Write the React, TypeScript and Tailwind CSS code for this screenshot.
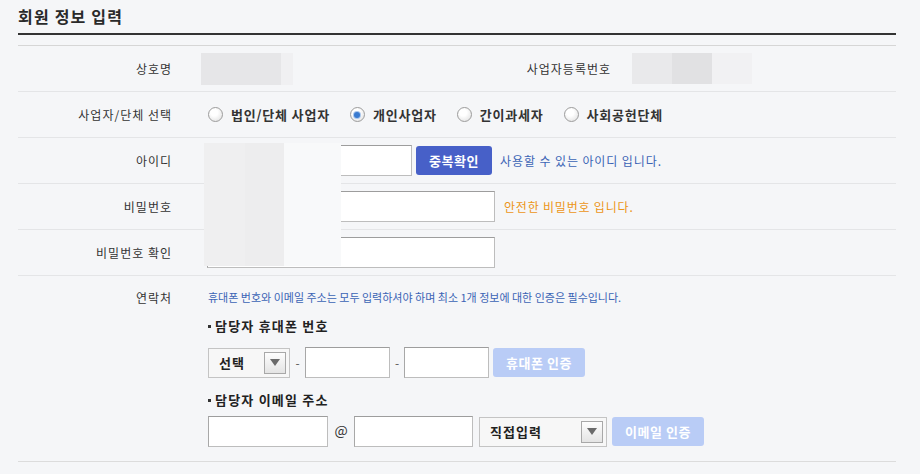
import React from "react";

const Radio = ({ checked, label }: { checked?: boolean; label: string }) => (
  <label className="flex items-center mr-[20px]">
    <span className="w-[15px] h-[15px] rounded-full border border-[#9c9c9c] bg-[radial-gradient(circle_at_40%_35%,#ffffff_30%,#dcdcdc_100%)] flex items-center justify-center">
      {checked && <span className="w-[6px] h-[6px] rounded-full bg-[#3a7bd0] shadow-[0_0_0_1px_#a9c6ec]" />}
    </span>
    <span className="ml-[8px] text-[13px] font-bold text-[#333] tracking-[0.8px]">{label}</span>
  </label>
);

const Input = ({ w }: { w: string }) => (
  <div className={`${w} h-[31px] bg-white border border-[#bdbdbd] border-t-[#9d9d9d] border-l-[#a8a8a8]`} />
);

const Select = ({ w, text }: { w: string; text: string }) => (
  <div className={`${w} h-[30px] bg-[#f7f7f7] border border-[#c4c4c4] flex items-center justify-between pl-[10px] pr-[3px]`}>
    <span className="text-[13px] font-bold text-[#222] tracking-[1px]">{text}</span>
    <span className="w-[22px] h-[22px] border border-[#a8a8a8] bg-[linear-gradient(#fdfdfd,#e4e4e4)] flex items-center justify-center">
      <span className="w-0 h-0 border-x-[5px] border-x-transparent border-t-[7px] border-t-[#6a6a6a]" />
    </span>
  </div>
);

const Label = ({ children }: { children: React.ReactNode }) => (
  <div className="w-[172px] shrink-0 text-right pr-[18px] text-[12px] text-[#333] tracking-[1px]">{children}</div>
);

export default function App() {
  return (
    <div className="relative w-[920px] h-[474px] bg-[#f5f6f8] overflow-hidden font-['Noto_Sans_CJK_KR','Noto_Sans',sans-serif] leading-[18px]">
      <div className="pl-[18px] pr-[24px]">
        {/* title */}
        <div className="h-[35px] border-b-2 border-[#333] flex items-start pt-[6px]">
          <h1 className="text-[16px] font-bold text-[#2a2a2a] leading-[20px] tracking-[1.2px]">회원 정보 입력</h1>
        </div>

        <div className="mt-[10px] border-t border-[#d6d6d6]">
          {/* 상호명 */}
          <div className="h-[46px] border-b border-[#e4e5e7] flex items-center">
            <Label>상호명</Label>
            <div className="flex-1 pl-[11px] flex">
              <div className="w-[80px] h-[32px] bg-[#e6e6e8]" />
              <div className="w-[12px] h-[32px] bg-[#f0f0f2]" />
            </div>
            <div className="w-[140px] text-right pr-[19px] text-[12px] text-[#333] tracking-[1px]">사업자등록번호</div>
            <div className="w-[266px] pl-[2px] flex">
              <div className="w-[40px] h-[31px] bg-[#e9e9eb]" />
              <div className="w-[40px] h-[31px] bg-[#e1e1e3]" />
              <div className="w-[40px] h-[31px] bg-[#f1f1f3]" />
            </div>
          </div>

          {/* 사업자/단체 선택 */}
          <div className="h-[46px] border-b border-[#e4e5e7] flex items-center">
            <Label>사업자/단체 선택</Label>
            <div className="pl-[18px] flex items-center">
              <Radio label="법인/단체 사업자" />
              <Radio checked label="개인사업자" />
              <Radio label="간이과세자" />
              <Radio label="사회공헌단체" />
            </div>
          </div>

          {/* 아이디 */}
          <div className="h-[46px] border-b border-[#e4e5e7] flex items-center">
            <Label>아이디</Label>
            <div className="pl-[17px] flex items-center">
              <Input w="w-[205px]" />
              <button className="ml-[4px] w-[76px] h-[29px] rounded-[3px] bg-[#4760c8] text-white text-[13px] font-bold tracking-[0.5px]">중복확인</button>
              <span className="ml-[8px] text-[12px] text-[#3b64b5] tracking-[0.9px]">사용할 수 있는 아이디 입니다.</span>
            </div>
          </div>

          {/* 비밀번호 */}
          <div className="h-[46px] border-b border-[#e4e5e7] flex items-center">
            <Label>비밀번호</Label>
            <div className="pl-[17px] flex items-center">
              <Input w="w-[288px]" />
              <span className="ml-[9px] text-[12px] text-[#ec9517] tracking-[0.8px]">안전한 비밀번호 입니다.</span>
            </div>
          </div>

          {/* 비밀번호 확인 */}
          <div className="h-[46px] border-b border-[#e4e5e7] flex items-center">
            <Label>비밀번호 확인</Label>
            <div className="pl-[17px] flex items-center">
              <Input w="w-[288px]" />
            </div>
          </div>

          {/* 연락처 */}
          <div className="h-[186px] border-b border-[#dcdcdc] flex items-start">
            <div className="pt-[13px]">
              <Label>연락처</Label>
            </div>
            <div className="pl-[18px] pt-[12px] flex flex-col">
              <p className="text-[11px] text-[#3b64b5] tracking-[0px]">
                휴대폰 번호와 이메일 주소는 모두 입력하셔야 하며 최소 1개 정보에 대한 인증은 필수입니다.
              </p>
              <div className="mt-[11px] flex items-center text-[13px] font-bold text-[#222] tracking-[1.2px]">
                <span className="w-[3px] h-[3px] bg-[#333] mr-[4px]" />
                담당자 휴대폰 번호
              </div>
              <div className="mt-[12px] flex items-center">
                <Select w="w-[82px]" text="선택" />
                <span className="w-[15px] text-center text-[12px] text-[#555]">-</span>
                <Input w="w-[85px]" />
                <span className="w-[14px] text-center text-[12px] text-[#555]">-</span>
                <Input w="w-[85px]" />
                <button className="ml-[4px] w-[92px] h-[29px] rounded-[3px] bg-[#b9ccf6] text-white text-[13px] font-bold tracking-[0.5px]">휴대폰 인증</button>
              </div>
              <div className="mt-[13px] flex items-center text-[13px] font-bold text-[#222] tracking-[1.2px]">
                <span className="w-[3px] h-[3px] bg-[#333] mr-[4px]" />
                담당자 이메일 주소
              </div>
              <div className="mt-[7px] flex items-center">
                <Input w="w-[120px]" />
                <span className="w-[26px] text-center text-[14px] text-[#333] -mt-[4px]">@</span>
                <Input w="w-[119px]" />
                <div className="ml-[6px]">
                  <Select w="w-[128px]" text="직접입력" />
                </div>
                <button className="ml-[5px] w-[92px] h-[29px] rounded-[3px] bg-[#b9ccf6] text-white text-[13px] font-bold tracking-[0.5px]">이메일 인증</button>
              </div>
            </div>
          </div>
        </div>
      </div>

      {/* masked area over id / password fields */}
      <div className="absolute left-[204px] top-[143px] h-[123px] flex">
        <div className="w-[41px] h-full bg-[#efeff0]" />
        <div className="w-[39px] h-full bg-[#ededee]" />
        <div className="w-[57px] h-full bg-[#f8f9fa]" />
      </div>
    </div>
  );
}
